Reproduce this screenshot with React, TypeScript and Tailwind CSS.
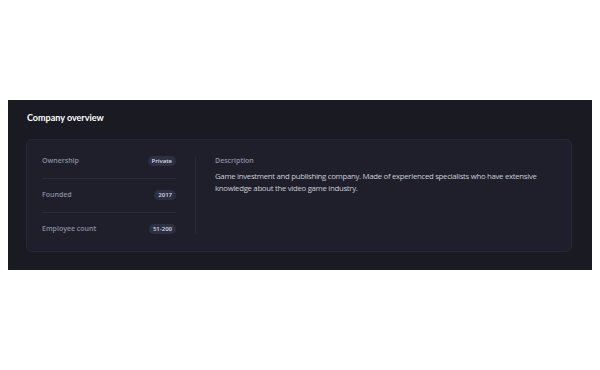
const rows = [
  { label: 'Ownership', value: 'Private' },
  { label: 'Founded', value: '2017' },
  { label: 'Employee count', value: '51-200' },
]

export default function App() {
  return (
    <div className="w-[600px] h-[370px] bg-white pt-[100px] px-[8px]" style={{ fontFamily: '"Open Sans", sans-serif' }}>
      <section className="h-[170px] bg-[#1a1a22] pl-[18px] pr-[20px] pt-[11px]">
        <h2 className="text-[9px] leading-[14px] font-bold text-white ml-[1px] mb-[14px] font-[Lato,sans-serif]">
          Company overview
        </h2>
        <div className="flex rounded-[6px] border border-[#262837] bg-[#1e1f2b] pl-[15px] pr-[16px] pt-[16px] pb-[17px]">
          <div className="w-[134px] flex flex-col shrink-0">
            {rows.map((r, i) => (
              <div
                key={r.label}
                className={[
                  'flex items-center justify-between h-[10px] box-content',
                  i === 0 ? 'pb-[12px]' : i === rows.length - 1 ? 'pt-[11px]' : 'pt-[11px] pb-[12px]',
                  i < rows.length - 1 ? 'border-b border-[#282a3a]' : '',
                ].join(' ')}
              >
                <span className="text-[7px] font-semibold text-[#8b8fa4]">{r.label}</span>
                <span className="rounded-full bg-[#2d2f42] px-[4px] h-[10px] leading-[10px] text-[6px] font-semibold text-[#dcdde4]">
                  {r.value}
                </span>
              </div>
            ))}
          </div>
          <div className="ml-[19px] border-l border-[#262837] pl-[19px] flex-1">
            <div className="text-[7px] leading-[10px] font-semibold text-[#8b8fa4]">Description</div>
            <p className="mt-[4px] text-[7.8px] leading-[12px] text-[#cbcdd6] tracking-[-0.3px]">
              Game investment and publishing company. Made of experienced specialists who have extensive knowledge about the video game industry.
            </p>
          </div>
        </div>
      </section>
    </div>
  )
}
